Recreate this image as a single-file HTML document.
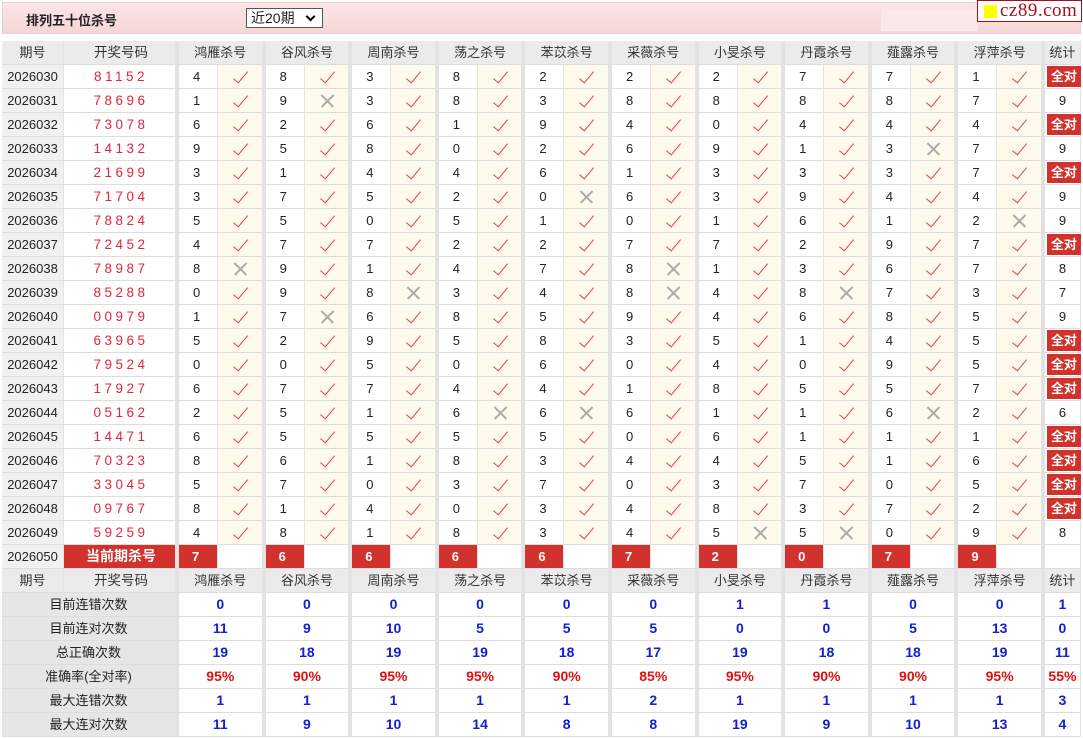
<!DOCTYPE html>
<html><head><meta charset="utf-8"><style>
*{box-sizing:border-box;margin:0;padding:0}
body{width:1083px;height:739px;background:#fff;font-family:"Liberation Sans","Noto Sans CJK SC",sans-serif;font-size:13px;color:#222;position:relative;overflow:hidden}
.top{position:absolute;left:2px;top:2px;width:1079px;height:32px;background:linear-gradient(#fbe6e6,#f6d6d6);border:1px solid #ead0d0}
.ttl{position:absolute;left:23px;top:7px;font-weight:bold;font-size:13px;color:#222}
.sel{position:absolute;left:243px;top:5px;width:77px;height:20px;background:#fff;border:1px solid #555;font-size:14px;line-height:18px;padding-left:4px}
.sel:after{content:"";position:absolute;right:8px;top:4px;width:5px;height:5px;border-right:2px solid #000;border-bottom:2px solid #000;transform:rotate(45deg)}
.pan{position:absolute;left:878px;top:6px;width:97px;height:22px;background:#fbe9e9}
.logo{position:absolute;left:977px;top:0;width:105px;height:22px;background:#fff;border:1px solid #a01020;font-family:"Liberation Serif",serif;font-size:19px;color:#a01020;line-height:20px;padding-left:22px;letter-spacing:.5px}
.logo:before{content:"";position:absolute;left:6px;top:4px;width:13px;height:13px;background:#ff0}
.tb{position:absolute;left:2px;top:41px;width:1079px}
.r{display:flex;height:24px}
.r>div{height:24px;line-height:23px;border-bottom:1px solid #ddd;border-right:1px solid #e4e4e4;text-align:center;flex:none}
.p{width:62px;background:#f1f1f1}
.c{width:112px;color:#e0263a;letter-spacing:3.5px;padding-left:3px;font-size:13.5px}
.n{width:42px;border-left:3px solid #e2e2e2;text-align:left!important;padding-left:14px}
.y,.x,.e{width:44.6px;background:#fffbec;position:relative}
.e{background:#fff}
.y:after{content:"";position:absolute;left:19px;top:3px;width:6px;height:14px;border-right:1.7px solid #e8384b;border-bottom:1.7px solid #e8384b;transform:rotate(40deg)}
.x:before,.x:after{content:"";position:absolute;left:14px;top:11px;width:17px;height:1.5px;background:#aaa;transform:rotate(45deg)}
.x:after{transform:rotate(-45deg)}
.s{width:39px;border-left:3px solid #e2e2e2;position:relative}
.q:after{content:"全对";position:absolute;left:2px;top:1px;width:34px;height:21px;background:#d2322d;color:#fff;font-weight:bold;line-height:21px;font-size:13px}
.h>div{background:#ebebeb;color:#333}
.h .hg{width:86.6px;border-left:3px solid #e2e2e2}
.h .s{background:#ebebeb}
.cur{background:#d2322d!important;color:#fff!important;font-weight:bold;letter-spacing:0!important;font-size:14px!important}
.rn{width:42px;border-left:3px solid #e2e2e2;background:#d2322d;color:#fff;font-weight:bold;text-align:left!important;padding-left:13px}
.l{width:174px;background:#e6e6e6}
.v{width:86.6px;border-left:3px solid #e2e2e2;color:#1020d0;font-weight:bold;font-size:14px}
.v.s{width:39px}
.red .v{color:#e01010}
</style></head><body>
<div class="top"><div class="ttl">排列五十位杀号</div><div class="sel">近20期</div><div class="pan"></div></div>
<div class="logo">cz89.com</div>
<div class="tb">
<div class="r h"><div class="p">期号</div><div class="c" style="color:#333;letter-spacing:0">开奖号码</div><div class="hg">鸿雁杀号</div><div class="hg">谷风杀号</div><div class="hg">周南杀号</div><div class="hg">荡之杀号</div><div class="hg">苯苡杀号</div><div class="hg">采薇杀号</div><div class="hg">小旻杀号</div><div class="hg">丹霞杀号</div><div class="hg">薤露杀号</div><div class="hg">浮萍杀号</div><div class="s">统计</div></div>
<div class="r"><div class="p">2026030</div><div class="c">81152</div><div class="n">4</div><div class="y"></div><div class="n">8</div><div class="y"></div><div class="n">3</div><div class="y"></div><div class="n">8</div><div class="y"></div><div class="n">2</div><div class="y"></div><div class="n">2</div><div class="y"></div><div class="n">2</div><div class="y"></div><div class="n">7</div><div class="y"></div><div class="n">7</div><div class="y"></div><div class="n">1</div><div class="y"></div><div class="s q"></div></div>
<div class="r"><div class="p">2026031</div><div class="c">78696</div><div class="n">1</div><div class="y"></div><div class="n">9</div><div class="x"></div><div class="n">3</div><div class="y"></div><div class="n">8</div><div class="y"></div><div class="n">3</div><div class="y"></div><div class="n">8</div><div class="y"></div><div class="n">8</div><div class="y"></div><div class="n">8</div><div class="y"></div><div class="n">8</div><div class="y"></div><div class="n">7</div><div class="y"></div><div class="s">9</div></div>
<div class="r"><div class="p">2026032</div><div class="c">73078</div><div class="n">6</div><div class="y"></div><div class="n">2</div><div class="y"></div><div class="n">6</div><div class="y"></div><div class="n">1</div><div class="y"></div><div class="n">9</div><div class="y"></div><div class="n">4</div><div class="y"></div><div class="n">0</div><div class="y"></div><div class="n">4</div><div class="y"></div><div class="n">4</div><div class="y"></div><div class="n">4</div><div class="y"></div><div class="s q"></div></div>
<div class="r"><div class="p">2026033</div><div class="c">14132</div><div class="n">9</div><div class="y"></div><div class="n">5</div><div class="y"></div><div class="n">8</div><div class="y"></div><div class="n">0</div><div class="y"></div><div class="n">2</div><div class="y"></div><div class="n">6</div><div class="y"></div><div class="n">9</div><div class="y"></div><div class="n">1</div><div class="y"></div><div class="n">3</div><div class="x"></div><div class="n">7</div><div class="y"></div><div class="s">9</div></div>
<div class="r"><div class="p">2026034</div><div class="c">21699</div><div class="n">3</div><div class="y"></div><div class="n">1</div><div class="y"></div><div class="n">4</div><div class="y"></div><div class="n">4</div><div class="y"></div><div class="n">6</div><div class="y"></div><div class="n">1</div><div class="y"></div><div class="n">3</div><div class="y"></div><div class="n">3</div><div class="y"></div><div class="n">3</div><div class="y"></div><div class="n">7</div><div class="y"></div><div class="s q"></div></div>
<div class="r"><div class="p">2026035</div><div class="c">71704</div><div class="n">3</div><div class="y"></div><div class="n">7</div><div class="y"></div><div class="n">5</div><div class="y"></div><div class="n">2</div><div class="y"></div><div class="n">0</div><div class="x"></div><div class="n">6</div><div class="y"></div><div class="n">3</div><div class="y"></div><div class="n">9</div><div class="y"></div><div class="n">4</div><div class="y"></div><div class="n">4</div><div class="y"></div><div class="s">9</div></div>
<div class="r"><div class="p">2026036</div><div class="c">78824</div><div class="n">5</div><div class="y"></div><div class="n">5</div><div class="y"></div><div class="n">0</div><div class="y"></div><div class="n">5</div><div class="y"></div><div class="n">1</div><div class="y"></div><div class="n">0</div><div class="y"></div><div class="n">1</div><div class="y"></div><div class="n">6</div><div class="y"></div><div class="n">1</div><div class="y"></div><div class="n">2</div><div class="x"></div><div class="s">9</div></div>
<div class="r"><div class="p">2026037</div><div class="c">72452</div><div class="n">4</div><div class="y"></div><div class="n">7</div><div class="y"></div><div class="n">7</div><div class="y"></div><div class="n">2</div><div class="y"></div><div class="n">2</div><div class="y"></div><div class="n">7</div><div class="y"></div><div class="n">7</div><div class="y"></div><div class="n">2</div><div class="y"></div><div class="n">9</div><div class="y"></div><div class="n">7</div><div class="y"></div><div class="s q"></div></div>
<div class="r"><div class="p">2026038</div><div class="c">78987</div><div class="n">8</div><div class="x"></div><div class="n">9</div><div class="y"></div><div class="n">1</div><div class="y"></div><div class="n">4</div><div class="y"></div><div class="n">7</div><div class="y"></div><div class="n">8</div><div class="x"></div><div class="n">1</div><div class="y"></div><div class="n">3</div><div class="y"></div><div class="n">6</div><div class="y"></div><div class="n">7</div><div class="y"></div><div class="s">8</div></div>
<div class="r"><div class="p">2026039</div><div class="c">85288</div><div class="n">0</div><div class="y"></div><div class="n">9</div><div class="y"></div><div class="n">8</div><div class="x"></div><div class="n">3</div><div class="y"></div><div class="n">4</div><div class="y"></div><div class="n">8</div><div class="x"></div><div class="n">4</div><div class="y"></div><div class="n">8</div><div class="x"></div><div class="n">7</div><div class="y"></div><div class="n">3</div><div class="y"></div><div class="s">7</div></div>
<div class="r"><div class="p">2026040</div><div class="c">00979</div><div class="n">1</div><div class="y"></div><div class="n">7</div><div class="x"></div><div class="n">6</div><div class="y"></div><div class="n">8</div><div class="y"></div><div class="n">5</div><div class="y"></div><div class="n">9</div><div class="y"></div><div class="n">4</div><div class="y"></div><div class="n">6</div><div class="y"></div><div class="n">8</div><div class="y"></div><div class="n">5</div><div class="y"></div><div class="s">9</div></div>
<div class="r"><div class="p">2026041</div><div class="c">63965</div><div class="n">5</div><div class="y"></div><div class="n">2</div><div class="y"></div><div class="n">9</div><div class="y"></div><div class="n">5</div><div class="y"></div><div class="n">8</div><div class="y"></div><div class="n">3</div><div class="y"></div><div class="n">5</div><div class="y"></div><div class="n">1</div><div class="y"></div><div class="n">4</div><div class="y"></div><div class="n">5</div><div class="y"></div><div class="s q"></div></div>
<div class="r"><div class="p">2026042</div><div class="c">79524</div><div class="n">0</div><div class="y"></div><div class="n">0</div><div class="y"></div><div class="n">5</div><div class="y"></div><div class="n">0</div><div class="y"></div><div class="n">6</div><div class="y"></div><div class="n">0</div><div class="y"></div><div class="n">4</div><div class="y"></div><div class="n">0</div><div class="y"></div><div class="n">9</div><div class="y"></div><div class="n">5</div><div class="y"></div><div class="s q"></div></div>
<div class="r"><div class="p">2026043</div><div class="c">17927</div><div class="n">6</div><div class="y"></div><div class="n">7</div><div class="y"></div><div class="n">7</div><div class="y"></div><div class="n">4</div><div class="y"></div><div class="n">4</div><div class="y"></div><div class="n">1</div><div class="y"></div><div class="n">8</div><div class="y"></div><div class="n">5</div><div class="y"></div><div class="n">5</div><div class="y"></div><div class="n">7</div><div class="y"></div><div class="s q"></div></div>
<div class="r"><div class="p">2026044</div><div class="c">05162</div><div class="n">2</div><div class="y"></div><div class="n">5</div><div class="y"></div><div class="n">1</div><div class="y"></div><div class="n">6</div><div class="x"></div><div class="n">6</div><div class="x"></div><div class="n">6</div><div class="y"></div><div class="n">1</div><div class="y"></div><div class="n">1</div><div class="y"></div><div class="n">6</div><div class="x"></div><div class="n">2</div><div class="y"></div><div class="s">6</div></div>
<div class="r"><div class="p">2026045</div><div class="c">14471</div><div class="n">6</div><div class="y"></div><div class="n">5</div><div class="y"></div><div class="n">5</div><div class="y"></div><div class="n">5</div><div class="y"></div><div class="n">5</div><div class="y"></div><div class="n">0</div><div class="y"></div><div class="n">6</div><div class="y"></div><div class="n">1</div><div class="y"></div><div class="n">1</div><div class="y"></div><div class="n">1</div><div class="y"></div><div class="s q"></div></div>
<div class="r"><div class="p">2026046</div><div class="c">70323</div><div class="n">8</div><div class="y"></div><div class="n">6</div><div class="y"></div><div class="n">1</div><div class="y"></div><div class="n">8</div><div class="y"></div><div class="n">3</div><div class="y"></div><div class="n">4</div><div class="y"></div><div class="n">4</div><div class="y"></div><div class="n">5</div><div class="y"></div><div class="n">1</div><div class="y"></div><div class="n">6</div><div class="y"></div><div class="s q"></div></div>
<div class="r"><div class="p">2026047</div><div class="c">33045</div><div class="n">5</div><div class="y"></div><div class="n">7</div><div class="y"></div><div class="n">0</div><div class="y"></div><div class="n">3</div><div class="y"></div><div class="n">7</div><div class="y"></div><div class="n">0</div><div class="y"></div><div class="n">3</div><div class="y"></div><div class="n">7</div><div class="y"></div><div class="n">0</div><div class="y"></div><div class="n">5</div><div class="y"></div><div class="s q"></div></div>
<div class="r"><div class="p">2026048</div><div class="c">09767</div><div class="n">8</div><div class="y"></div><div class="n">1</div><div class="y"></div><div class="n">4</div><div class="y"></div><div class="n">0</div><div class="y"></div><div class="n">3</div><div class="y"></div><div class="n">4</div><div class="y"></div><div class="n">8</div><div class="y"></div><div class="n">3</div><div class="y"></div><div class="n">7</div><div class="y"></div><div class="n">2</div><div class="y"></div><div class="s q"></div></div>
<div class="r"><div class="p">2026049</div><div class="c">59259</div><div class="n">4</div><div class="y"></div><div class="n">8</div><div class="y"></div><div class="n">1</div><div class="y"></div><div class="n">8</div><div class="y"></div><div class="n">3</div><div class="y"></div><div class="n">4</div><div class="y"></div><div class="n">5</div><div class="x"></div><div class="n">5</div><div class="x"></div><div class="n">0</div><div class="y"></div><div class="n">9</div><div class="y"></div><div class="s">8</div></div>
<div class="r"><div class="p">2026050</div><div class="c cur">当前期杀号</div><div class="rn">7</div><div class="e"></div><div class="rn">6</div><div class="e"></div><div class="rn">6</div><div class="e"></div><div class="rn">6</div><div class="e"></div><div class="rn">6</div><div class="e"></div><div class="rn">7</div><div class="e"></div><div class="rn">2</div><div class="e"></div><div class="rn">0</div><div class="e"></div><div class="rn">7</div><div class="e"></div><div class="rn">9</div><div class="e"></div><div class="s"></div></div>
<div class="r h"><div class="p">期号</div><div class="c" style="color:#333;letter-spacing:0">开奖号码</div><div class="hg">鸿雁杀号</div><div class="hg">谷风杀号</div><div class="hg">周南杀号</div><div class="hg">荡之杀号</div><div class="hg">苯苡杀号</div><div class="hg">采薇杀号</div><div class="hg">小旻杀号</div><div class="hg">丹霞杀号</div><div class="hg">薤露杀号</div><div class="hg">浮萍杀号</div><div class="s">统计</div></div>
<div class="r"><div class="l">目前连错次数</div><div class="v">0</div><div class="v">0</div><div class="v">0</div><div class="v">0</div><div class="v">0</div><div class="v">0</div><div class="v">1</div><div class="v">1</div><div class="v">0</div><div class="v">0</div><div class="v s">1</div></div>
<div class="r"><div class="l">目前连对次数</div><div class="v">11</div><div class="v">9</div><div class="v">10</div><div class="v">5</div><div class="v">5</div><div class="v">5</div><div class="v">0</div><div class="v">0</div><div class="v">5</div><div class="v">13</div><div class="v s">0</div></div>
<div class="r"><div class="l">总正确次数</div><div class="v">19</div><div class="v">18</div><div class="v">19</div><div class="v">19</div><div class="v">18</div><div class="v">17</div><div class="v">19</div><div class="v">18</div><div class="v">18</div><div class="v">19</div><div class="v s">11</div></div>
<div class="r red"><div class="l">准确率(全对率)</div><div class="v">95%</div><div class="v">90%</div><div class="v">95%</div><div class="v">95%</div><div class="v">90%</div><div class="v">85%</div><div class="v">95%</div><div class="v">90%</div><div class="v">90%</div><div class="v">95%</div><div class="v s">55%</div></div>
<div class="r"><div class="l">最大连错次数</div><div class="v">1</div><div class="v">1</div><div class="v">1</div><div class="v">1</div><div class="v">1</div><div class="v">2</div><div class="v">1</div><div class="v">1</div><div class="v">1</div><div class="v">1</div><div class="v s">3</div></div>
<div class="r"><div class="l">最大连对次数</div><div class="v">11</div><div class="v">9</div><div class="v">10</div><div class="v">14</div><div class="v">8</div><div class="v">8</div><div class="v">19</div><div class="v">9</div><div class="v">10</div><div class="v">13</div><div class="v s">4</div></div>
</div>
</body></html>
